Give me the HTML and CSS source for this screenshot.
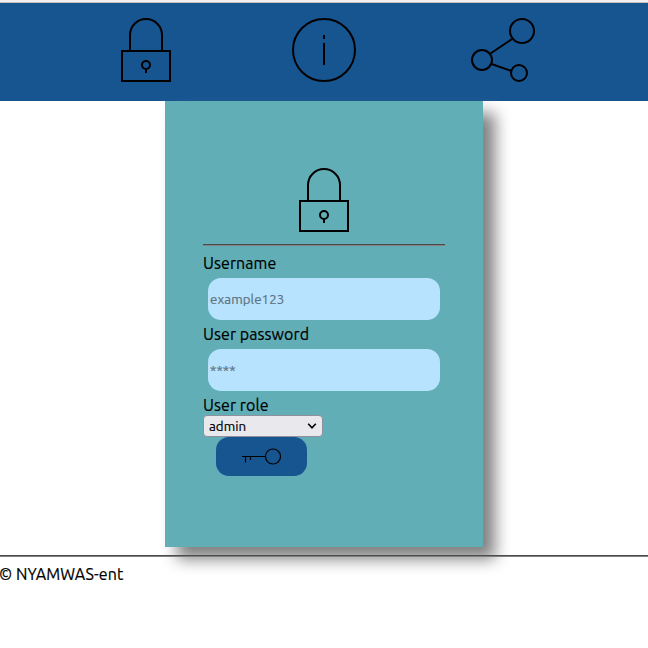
FILE: index.html
```html
<!DOCTYPE html>
<html lang="en">
<head>
<meta charset="utf-8">
<title>NYAMWAS-ent</title>
<link rel="stylesheet" href="styles.css">
</head>
<body>
<header class="topbar">
  <svg class="icon" viewBox="0 0 64 64"><path d="M16 32V17a16 16 0 0 1 32 0V32M8 33H56V63H8ZM32 51V55"/><circle cx="32" cy="47" r="4"/></svg>
  <svg class="icon info" viewBox="0 0 64 64"><circle cx="32" cy="32" r="31"/><path d="M32 17V21M32 25V47"/></svg>
  <svg class="icon" viewBox="0 0 64 64"><circle cx="51" cy="13" r="12"/><circle cx="11" cy="42" r="10"/><circle cx="48" cy="55" r="8"/><path d="M19.500 35.500L41 21M20.500 46L40.500 53"/></svg>
</header>
<main class="card">
  <svg class="icon lock" viewBox="0 0 64 64"><path d="M16 32V17a16 16 0 0 1 32 0V32M8 33H56V63H8ZM32 51V55"/><circle cx="32" cy="47" r="4"/></svg>
  <hr class="rule">
  <form class="form">
    <label class="label" for="user">Username</label>
    <input class="field" id="user" type="text" placeholder="example123">
    <label class="label" for="pass">User password</label>
    <input class="field" id="pass" type="password" placeholder="****">
    <label class="label" for="role">User role</label>
    <div class="select-wrap">
      <select class="select" id="role"><option>admin</option></select>
      <svg class="chevron" viewBox="0 0 10 6"><path d="M1.200 .8L5 4.800L8.800 .8"/></svg>
    </div>
    <button class="submit" type="button" aria-label="Log in">
      <svg class="key" viewBox="0 0 40 18"><circle cx="32" cy="9.500" r="7.500"/><path d="M1 9.500H24.500M4.500 9.500V15.500M9.500 9.500V13"/></svg>
    </button>
  </form>
</main>
<footer class="footer">
  <hr class="rule">
  <p class="copyright">© NYAMWAS-ent</p>
</footer>
</body>
</html>
```
FILE: styles.css
```css
* {
  box-sizing: border-box;
}

body {
  margin: 0;
  border-top: 2px solid #f2f0f0;
  background: #fff;
  color: #000;
  font: 16px/18px Ubuntu, "Noto Sans", sans-serif;
  letter-spacing: 0.08px;
  -webkit-text-stroke: 0.2px;
}

.topbar {
  display: flex;
  justify-content: space-between;
  height: 99px;
  padding: 15px 113px 0 114px;
  border-top: 1px solid #c9c0ba;
  background: #175591;
}

.icon {
  display: block;
  width: 64px;
  height: 64px;
  fill: none;
  stroke: #000;
  stroke-width: 2;
}

.info {
  margin-right: 1px;
}

.card {
  width: 318px;
  height: 446px;
  margin: 0 auto;
  padding: 67px 38px 0;
  background: #61aeb7;
  box-shadow: 12px 12px 15px gray;
}

.lock {
  margin: 0 auto;
}

.rule {
  height: 2px;
  margin: 0;
  border: 0;
  border-top: 1px solid #4b4b4d;
  background: #85807f;
}

.card .rule {
  margin-top: 12px;
}

.form {
  display: flex;
  flex-direction: column;
  align-items: flex-start;
  padding-top: 8px;
}

.label {
  height: 19px;
  white-space: nowrap;
}

.field {
  width: 232px;
  height: 42px;
  margin: 5px;
  padding: 1px 2px;
  border: 0;
  border-radius: 13px;
  background: #b7e3ff;
  font: 13.333px Ubuntu, "Noto Sans", sans-serif;
  letter-spacing: 0.08px;
}

.field::placeholder {
  color: #5d7280;
  opacity: 1;
}

.select-wrap {
  position: relative;
  width: 120px;
  height: 22px;
}

.select {
  display: block;
  width: 120px;
  height: 22px;
  padding: 0 5px;
  appearance: none;
  border: 1px solid #8f8f9d;
  border-radius: 4px;
  background: #e9e9ed;
  color: #000;
  font: 13.333px Ubuntu, "Noto Sans", sans-serif;
}

.chevron {
  position: absolute;
  top: 8px;
  right: 6px;
  width: 10px;
  height: 6px;
  fill: none;
  stroke: #000;
  stroke-width: 1.600;
}

.submit {
  display: flex;
  align-items: center;
  justify-content: center;
  width: 91px;
  height: 39px;
  margin-left: 13px;
  padding: 0 1px 1px 0;
  border: 0;
  border-radius: 13px;
  background: #175591;
}

.key {
  width: 40px;
  height: 18px;
  fill: none;
  stroke: #000;
  stroke-width: 1.200;
}

.footer {
  position: relative;
  padding-top: 8px;
}

.copyright {
  margin: 8px 0 0 -1px;
}
```
